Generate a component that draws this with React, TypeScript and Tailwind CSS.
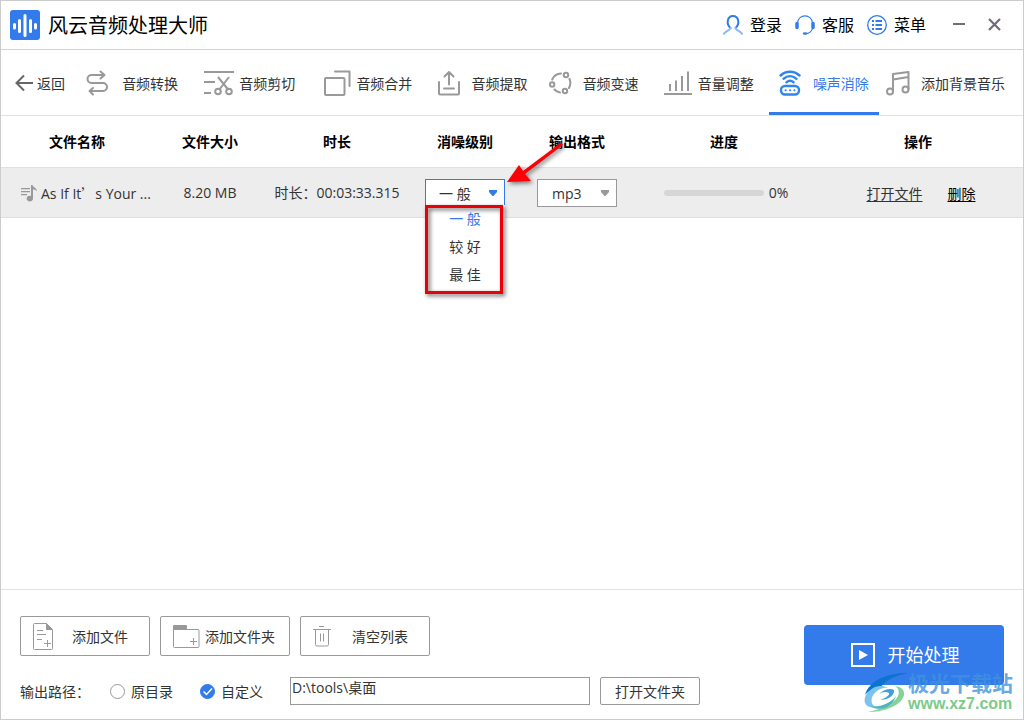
import { useState, type ReactNode } from "react";

const levels = ["一 般", "较 好", "最 佳"];
const formats = ["mp3", "wav", "flac"];

const stroke = {
  fill: "none",
  stroke: "currentColor",
  strokeWidth: 2,
  strokeLinecap: "round",
  strokeLinejoin: "round",
} as const;

const BackIcon = () => (
  <svg width="18" height="18" viewBox="0 0 18 18" {...stroke} strokeLinecap="butt" strokeLinejoin="miter">
    <path d="M18 9H1.500M9 1.500L1.500 9L9 16.500" />
  </svg>
);

const ConvertIcon = () => (
  <svg width="23" height="26" viewBox="0 0 23 26" {...stroke}>
    <path d="M14.500 1.500L18.500 5L14.500 8.500M18 5H5.500A4 4 0 0 0 5.500 13H17A4 4 0 0 1 17 21H4.500M7 18L3.500 21L7 24.500" />
  </svg>
);

const CutIcon = () => (
  <svg width="31" height="26" viewBox="0 0 31 26" {...stroke} strokeLinecap="butt">
    <path d="M1 2H31M1 12H12M1 23H8M15 7L25.500 20M26 7L16 20" />
    <circle cx="15" cy="21.500" r="2.800" />
    <circle cx="26" cy="21.500" r="2.800" />
  </svg>
);

const MergeIcon = () => (
  <svg width="27" height="26" viewBox="0 0 27 26" {...stroke}>
    <rect x="1" y="8" width="19.500" height="17" rx="1" />
    <path d="M11 1.500H25.500V16" />
  </svg>
);

const ExtractIcon = () => (
  <svg width="23" height="26" viewBox="0 0 23 26" {...stroke}>
    <path d="M1 12V23.500A1 1 0 0 0 2 24.500H20A1 1 0 0 0 21 23.500V12M11 14.500V2M6.500 6.500L11 2L15.500 6.500M6 18.500H16" />
  </svg>
);

const SpeedIcon = () => (
  <svg width="23" height="24" viewBox="0 0 23 24" {...stroke}>
    <circle cx="17" cy="4" r="2.200" />
    <circle cx="3.200" cy="13.500" r="2.200" />
    <circle cx="16" cy="20" r="2.200" />
    <path d="M3.200 8.500A10 10 0 0 1 12 2.500M20.500 8A10.500 10.500 0 0 1 20 17M11 21.500A9.500 9.500 0 0 1 5.500 18.500" />
  </svg>
);

const VolumeIcon = () => (
  <svg width="28" height="26" viewBox="0 0 28 26" {...stroke} strokeLinecap="butt">
    <path d="M0 24H28M6 21V14M12 21V10.500M18 21V6M24 21V1.500" />
  </svg>
);

const NoiseIcon = () => (
  <svg width="22" height="26" viewBox="0 0 22 26" {...stroke} strokeWidth={2.4}>
    <path d="M1.500 5.500C7 .5 15 .5 20.500 5.500M4.500 8.800C8.500 5.300 13.500 5.300 17.500 8.800M7.500 12.200C9.700 10.500 12.300 10.500 14.500 12.200" />
    <rect x="2" y="16" width="18" height="8.500" rx="4" />
    <path d="M6.500 20.200h.2M11 20.200h.2M15.300 20.200h.2" strokeWidth="2" />
  </svg>
);

const MusicIcon = () => (
  <svg width="24" height="26" viewBox="0 0 24 26" {...stroke}>
    <path d="M7 21V4L22.500 2V19M7 9.500L22.500 7" />
    <circle cx="4" cy="21.500" r="3" />
    <circle cx="19.500" cy="19.500" r="3" />
  </svg>
);

const tools = [
  { label: "音频转换", icon: <ConvertIcon />, size: "w-[112px] pl-2.5 pr-2.5" },
  { label: "音频剪切", icon: <CutIcon />, size: "w-[112px] pl-2.5 pr-2.5" },
  { label: "音频合并", icon: <MergeIcon />, size: "w-[112px] pl-[14px] pr-2.5" },
  { label: "音频提取", icon: <ExtractIcon />, size: "w-[110px] pl-2.5 pr-2.5" },
  { label: "音频变速", icon: <SpeedIcon />, size: "w-[108px] pl-1.5 pr-3" },
  { label: "音量调整", icon: <VolumeIcon />, size: "w-[108px] pl-2 pr-2.5" },
  { label: "噪声消除", icon: <NoiseIcon />, size: "w-[110px] pl-2.5 pr-2.5" },
];

const Header = () => (
  <header className="flex h-[49px] shrink-0 items-center border-b border-[#d2d2d2] pr-[22px] pl-[9px]">
    <svg width="30" height="30" viewBox="0 0 30 30">
      <rect width="30" height="30" rx="3" fill="#337aea" />
      <path
        d="M4.500 14.500V18M9.500 10.500V21.500M15 5.500V25.500M20.500 10.500V21.500M25.500 14.500V18"
        stroke="#fff"
        strokeWidth="3"
        strokeLinecap="round"
      />
    </svg>
    <h1 className="ml-2 flex-1 pt-0.5 text-[20px] leading-7 text-black">风云音频处理大师</h1>

    <nav className="flex gap-[13px] text-base text-black">
      <button className="flex items-center gap-[7px]">
        <svg width="20" height="20" viewBox="0 0 20 20" {...stroke} className="text-[#337aea]">
          <path d="M7.500 13C3 9.500 4 1 10 1S17 9.500 12.500 13" />
          <path d="M7.500 13C7 15.500 3 15.500 1 18.800M12.500 13C13 15.500 17 15.500 19 18.800" className="text-[#8db7f5]" stroke="currentColor" />
        </svg>
        登录
      </button>
      <button className="flex items-center gap-[7px]">
        <svg width="20" height="20" viewBox="0 0 20 20" fill="none" stroke="#337aea">
          <path d="M2.500 8C3.500-1.500 16.500-1.500 17.500 8" strokeWidth="1.200" />
          <path d="M17.500 13C17 16 15 18 11 18.800" strokeWidth="1.200" />
          <path d="M2 8.500V12.500M18 8.500V12.500" strokeWidth="3.500" strokeLinecap="round" />
          <ellipse cx="10" cy="18.500" rx="2.300" ry="1.300" fill="#337aea" stroke="none" />
        </svg>
        客服
      </button>
      <button className="flex items-center gap-[7px]">
        <svg width="20" height="20" viewBox="0 0 20 20" fill="none" stroke="#337aea">
          <circle cx="10" cy="10" r="9.300" strokeWidth="1.300" />
          <path d="M5 6H7M8.500 6H15M5 10H7M8.500 10H15M5 14H7M8.500 14H15" strokeWidth="2" />
        </svg>
        菜单
      </button>
    </nav>

    <button aria-label="最小化" className="ml-[27px] text-[#736b78]">
      <svg width="12" height="14" viewBox="0 0 12 14" stroke="currentColor" strokeWidth="2">
        <path d="M0 6H12" />
      </svg>
    </button>
    <button aria-label="关闭" className="ml-[23px] text-[#736b78]">
      <svg width="13" height="14" viewBox="0 0 13 14" stroke="currentColor" strokeWidth="2.200">
        <path d="M1 1L12 12M12 1L1 12" />
      </svg>
    </button>
  </header>
);

const Toolbar = () => {
  const [active, setActive] = useState("噪声消除");

  return (
    <nav className="flex h-[66px] shrink-0 items-stretch justify-between border-b border-[#e2e2e2] pr-[18px] pl-[14px] whitespace-nowrap">
      <button className="flex w-14 items-center gap-1">
        <span className="text-[#666]"><BackIcon /></span>
        <span className="pt-0.5">返回</span>
      </button>
      {tools.map((tool) => (
        <button
          key={tool.label}
          onClick={() => setActive(tool.label)}
          className={`flex items-center justify-between border-y-3 border-t-transparent ${tool.size} ${
            active === tool.label ? "border-b-[#337aea] text-[#337aea]" : "border-b-transparent"
          }`}
        >
          <span className={active === tool.label ? "text-[#2f86ee]" : "text-[#999]"}>{tool.icon}</span>
          <span className="pt-0.5">{tool.label}</span>
        </button>
      ))}
      <button className="flex w-[121px] items-center justify-end gap-[11px]">
        <span className="text-[#999]"><MusicIcon /></span>
        <span className="pt-0.5">添加背景音乐</span>
      </button>
    </nav>
  );
};

const Caret = ({ className }: { className: string }) => (
  <svg width="8" height="6" viewBox="0 0 8 6" fill="currentColor" className={className}>
    <path d="M0 0H8V2L4.500 6H3.500L0 2Z" />
  </svg>
);

const LevelSelect = () => {
  const [level, setLevel] = useState(levels[0]);

  return (
    <div className="relative mx-auto w-20 text-left">
      <select
        aria-label="消噪级别"
        value={level}
        onChange={(e) => setLevel(e.target.value)}
        className="block h-7 w-full appearance-none border border-[#337aea] bg-white pt-0.5 pl-[13px]"
      >
        {levels.map((item) => (
          <option key={item}>{item}</option>
        ))}
      </select>
      <Caret className="pointer-events-none absolute top-[11px] right-2 text-[#337aea]" />

      {/* Opened list */}
      <ul className="absolute top-[26px] left-0 z-10 w-20 bg-white pb-1">
        {levels.map((item) => (
          <li key={item}>
            <button
              onClick={() => setLevel(item)}
              className={item === level ? "h-7 w-full text-[#337aea]" : "h-7 w-full"}
            >
              {item}
            </button>
          </li>
        ))}
      </ul>

      {/* Highlight frame and arrow */}
      <div className="pointer-events-none absolute top-[26px] left-0 z-20 h-[89px] w-[78px] border-3 border-[#ec0008] drop-shadow-[2px_2px_2px_rgba(0,0,0,0.6)]" />
      <svg
        width="70"
        height="60"
        viewBox="0 0 70 60"
        className="pointer-events-none absolute -top-[44px] left-[75px] z-20 drop-shadow-[2px_2px_2px_rgba(0,0,0,0.5)]"
      >
        <path d="M7 47L19 30L23 36L61 7.500L63 10L25 39L31 46Z" fill="#fb0007" />
      </svg>
    </div>
  );
};

const FormatSelect = () => (
  <div className="relative mx-auto w-20 text-left">
    <select
      aria-label="输出格式"
      className="block h-7 w-full appearance-none border border-[#999] bg-white pt-0.5 pl-[14px]"
    >
      {formats.map((item) => (
        <option key={item}>{item}</option>
      ))}
    </select>
    <Caret className="pointer-events-none absolute top-[11px] right-2 text-[#999]" />
  </div>
);

const FileTable = () => (
  <table className="w-full table-fixed border-separate border-spacing-0 text-center whitespace-nowrap">
    <colgroup>
      <col className="w-[152px]" />
      <col className="w-[114px]" />
      <col className="w-[140px]" />
      <col className="w-[116px]" />
      <col className="w-[108px]" />
      <col className="w-[186px]" />
      <col className="w-[206px]" />
    </colgroup>
    <thead>
      <tr className="h-[52px] text-black *:border-b *:border-[#e0e0e0]">
        <th>文件名称</th>
        <th>文件大小</th>
        <th>时长</th>
        <th>消噪级别</th>
        <th>输出格式</th>
        <th>进度</th>
        <th className="pr-1">操作</th>
      </tr>
    </thead>
    <tbody>
      <tr className="h-[50px] bg-[#ededed] *:border-b *:border-[#e0e0e0] *:pt-px">
        <td>
          <div className="flex items-center gap-1 pl-5">
            <svg width="16" height="17" viewBox="0 0 16 17" fill="#999" className="shrink-0">
              <path d="M0 3H9V4.200H0ZM0 6H9V7.200H0ZM0 9H6V10.200H0ZM10 0H11.500C12 2.500 15.500 2.500 16 6C14.500 4.500 13 4.500 12 4.500V13.500A3.200 2.800 0 1 1 10 11Z" />
            </svg>
            <span>
              As If It<span className="font-['Noto_Sans_CJK_SC',sans-serif]">’</span>s Your ...
            </span>
          </div>
        </td>
        <td>8.20 MB</td>
        <td>时长：00:03:33.315</td>
        <td><LevelSelect /></td>
        <td><FormatSelect /></td>
        <td>
          <div className="flex items-center justify-center gap-[5px] pl-1">
            <div role="progressbar" aria-label="进度" aria-valuenow={0} className="h-1.5 w-[100px] rounded-sm bg-[#d6d6d6]" />
            <span>0%</span>
          </div>
        </td>
        <td>
          <div className="flex justify-center gap-[25px] pt-px pl-0.5">
            <a href="#open" className="underline underline-offset-2">打开文件</a>
            <a href="#delete" className="text-black underline underline-offset-2">删除</a>
          </div>
        </td>
      </tr>
    </tbody>
  </table>
);

const ListButton = ({ icon, children }: { icon: ReactNode; children: ReactNode }) => (
  <button className="flex h-10 w-[130px] items-center justify-between rounded-xs border border-[#999] pr-[14px] pl-3">
    {icon}
    <span className="w-[70px] pt-0.5 text-center">{children}</span>
  </button>
);

const thin = { fill: "none", stroke: "#999", strokeWidth: 1 } as const;

const Footer = () => {
  const [target, setTarget] = useState("custom");

  return (
    <footer className="flex shrink-0 items-start justify-between border-t border-[#e2e2e2] pt-[26px] pr-[19px] pb-[14px] pl-[19px] whitespace-nowrap">
      <div>
        <div className="flex gap-2.5">
          <ListButton
            icon={
              <svg width="21" height="27" viewBox="0 0 21 27" {...thin}>
                <path d="M13.500 .5H1.500A1 1 0 0 0 .5 1.500V25.500A1 1 0 0 0 1.500 26.500H18.500A1 1 0 0 0 19.500 25.500V7M4 7.500H10M4 11.500H13M4 16.500H9M14.500 17V24M11 20.500H18" />
                <path d="M13.500 .5L19.500 6.500H13.500Z" fill="#999" />
              </svg>
            }
          >
            添加文件
          </ListButton>
          <ListButton
            icon={
              <svg width="27" height="23" viewBox="0 0 27 23" {...thin}>
                <path d="M.5 4.500V21.500A1 1 0 0 0 1.500 22.500H25A1 1 0 0 0 26 21.500V5.500A1 1 0 0 0 25 4.500ZM20.500 13V20M17 16.500H24" />
                <path d="M.5 .5H13.500V4.500H.5Z" fill="#999" />
              </svg>
            }
          >
            添加文件夹
          </ListButton>
          <ListButton
            icon={
              <svg width="18" height="21" viewBox="0 0 18 21" {...thin}>
                <path d="M6 .5H11M0 3.500H18M2.500 3.500V18.500A1.500 1.500 0 0 0 4 20H14A1.500 1.500 0 0 0 15.500 18.500V3.500M7.500 7.500V15.500M10.500 7.500V15.500" />
              </svg>
            }
          >
            清空列表
          </ListButton>
        </div>

        <div className="mt-[21px] flex items-center">
          <span className="w-[90px] pt-0.5">输出路径：</span>
          <label className="flex w-[90px] items-center gap-1.5">
            <input
              type="radio"
              name="target"
              checked={target === "source"}
              onChange={() => setTarget("source")}
              className="size-[15px] appearance-none rounded-full border border-[#999] bg-white"
            />
            <span className="pt-0.5">原目录</span>
          </label>
          <label className="flex w-[90px] items-center gap-1.5">
            <span className="relative flex">
              <input
                type="radio"
                name="target"
                checked={target === "custom"}
                onChange={() => setTarget("custom")}
                className="size-[15px] appearance-none rounded-full border border-[#999] bg-white checked:border-[#337aea] checked:bg-[#337aea]"
              />
              <svg width="15" height="15" viewBox="0 0 15 15" className="pointer-events-none absolute inset-0">
                <path d="M3.500 7.500L6.500 10.500L12 4.500" fill="none" stroke="#fff" strokeWidth="1.500" />
              </svg>
            </span>
            <span className="pt-0.5">自定义</span>
          </label>
          <input
            type="text"
            aria-label="输出路径"
            defaultValue="D:\tools\桌面"
            className="h-7 w-[300px] border border-[#999] bg-white px-px pb-2"
          />
          <button className="ml-2.5 h-7 w-[100px] rounded-xs border border-[#999] pt-0.5">打开文件夹</button>
        </div>
      </div>

      <button className="mt-[9px] flex h-[60px] w-[200px] items-center justify-center gap-[13px] rounded-sm bg-[#337aea] pl-0.5 text-lg text-white">
        <svg width="24" height="24" viewBox="0 0 24 24">
          <rect x="1" y="1" width="22" height="22" fill="none" stroke="#fff" strokeWidth="2" />
          <path d="M8 7L17 12L8 17Z" fill="#fff" />
        </svg>
        <span>开始处理</span>
      </button>
    </footer>
  );
};

const Watermark = () => (
  <div className="pointer-events-none absolute right-[10px] bottom-[5px] flex items-center font-bold whitespace-nowrap">
    <svg width="44" height="42" viewBox="0 0 44 42">
      <path d="M1 23C5 9 22 1 44 1C31 4 20 8 16 17C12 16 5 18 1 23Z" fill="#0c74cf" />
      <path d="M2 23C-2 31 3 37 12 35C7 33 6 27 10 22C13 18 19 15 24 16C15 11 6 16 2 23Z" fill="#7cc3ec" />
      <path d="M15 22C20 17 27 16 30 18C31 24 23 28 16 28C22 26 26 23 25 21C22 19 18 20 15 22Z" fill="#3f9fe4" />
      <path d="M31 14C45 16 42 29 28 35C20 39 11 40 4 40C18 37 31 31 34 24C36 19 34 16 31 14Z" fill="#86d39a" />
      <path d="M6 34C15 36 27 31 32 24C29 34 17 41 6 34Z" fill="#4fb3c0" />
    </svg>
    <div>
      <p className="text-[21px] leading-[22px] text-[#3f93dc]/80">极光下载站</p>
      <p className="font-['Liberation_Sans',sans-serif] text-base leading-5 text-[#7ccb8b]">www.xz7.com</p>
    </div>
  </div>
);

const App = () => {
  return (
    <div className="relative flex h-screen min-w-[960px] flex-col overflow-hidden border border-[#ccc] bg-white font-['Open_Sans','Noto_Sans_CJK_SC',sans-serif] text-sm text-[#333]">
      <Header />
      <Toolbar />
      <main className="flex-1">
        <FileTable />
      </main>
      <Footer />
      <Watermark />
    </div>
  );
};

export default App;
